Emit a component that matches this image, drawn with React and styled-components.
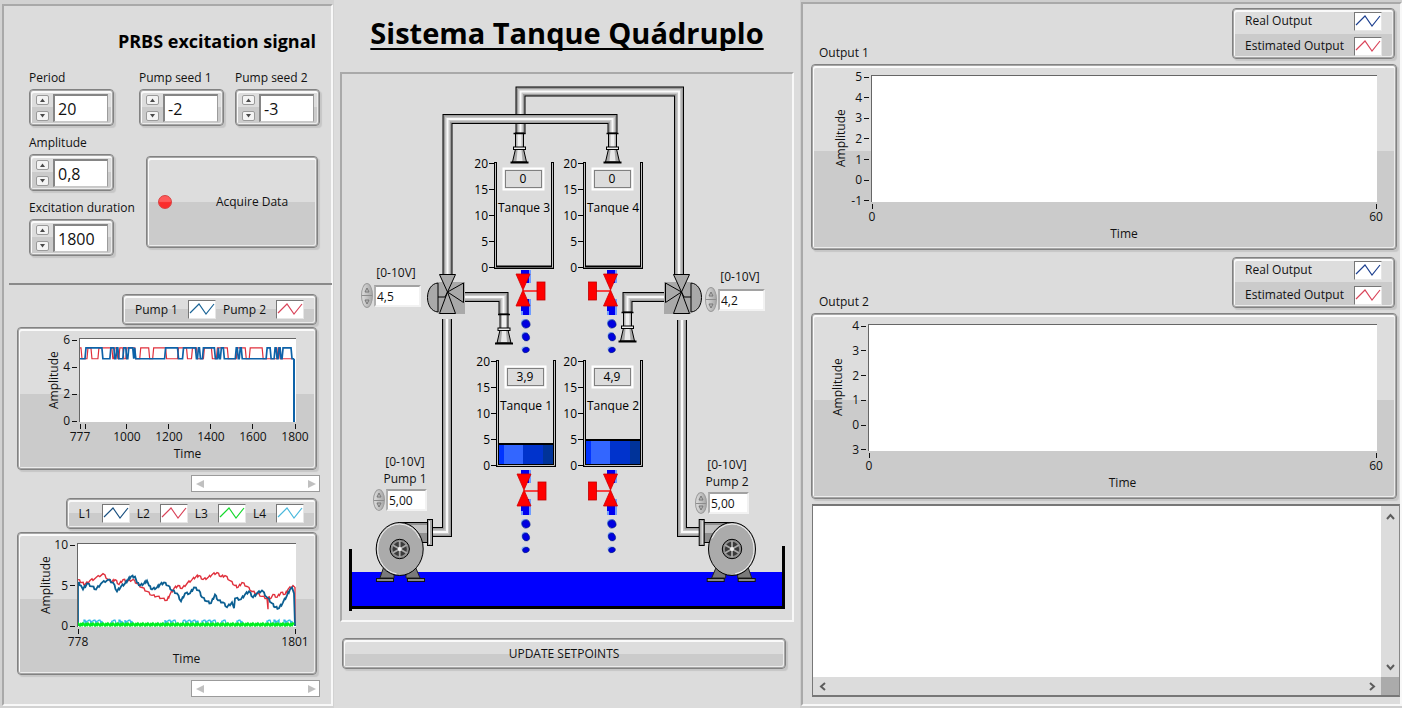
import React from "react";
import styled, { createGlobalStyle, css } from "styled-components";

const GlobalStyle = createGlobalStyle`
  *, *::before, *::after { box-sizing: border-box; }
  body {
    margin: 0;
    background: #dcdcdc;
    color: #111;
    font-family: "Open Sans", "Noto Sans", sans-serif;
    font-size: 12px;
    line-height: 16px;
  }
  button, input, textarea { font: inherit; color: inherit; }
`;

/* ---------- shared surfaces ---------- */

const bevel = css`
  border: 1px solid #828282;
  border-radius: 4px;
  background: linear-gradient(#dddddd 50%, #cbcbcb 50%);
  box-shadow:
    inset 0 0 0 1px #a6a6a6,
    inset 1px 2px 0 1px #fafafa,
    inset -1px -1px 0 1px #ececec,
    2px 2px 1px #c6c6c6;
`;

const Screen = styled.main`
  display: grid;
  grid-template-columns: 334px 466px minmax(0, 1fr);
  min-height: 100vh;
`;

const Column = styled.section`
  display: flex;
  flex-direction: column;
  min-width: 0;
  padding: ${(p) => p.$pad};
  background: ${(p) => p.$bg || "transparent"};
`;

const Frame = styled.div`
  flex: ${(p) => (p.$grow ? 1 : "none")};
  display: flex;
  flex-direction: column;
  padding-top: ${(p) => p.$top || 0}px;
  border: 2px solid;
  border-color: #a9a9a9 #f8f8f8 #f8f8f8 #a9a9a9;
  background: #dcdcdc;
`;

/* ---------- numeric fields ---------- */

const FieldBox = styled.div`
  display: flex;
  flex-direction: column;
  gap: 3px;
  width: 85px;
  white-space: nowrap;
`;

const FieldBody = styled.div`
  ${bevel}
  display: flex;
  align-items: center;
  gap: 4px;
  height: 37px;
  padding: 0 5px 0 6px;
`;

const Stepper = styled.div`
  display: flex;
  flex-direction: column;
  gap: 6px;
`;

const StepButton = styled.button`
  display: flex;
  align-items: center;
  justify-content: center;
  width: 13px;
  height: 10px;
  padding: 0;
  border: 1px solid #9a9a9a;
  border-radius: 2px;
  background: #f4f4f4;
`;

const FieldInput = styled.input`
  flex: 1;
  min-width: 0;
  height: 28px;
  padding: 2px 3px 0;
  border: 1px solid;
  border-width: 2px 1px 1px 2px;
  border-color: #858585 #9c9c9c #c8c8c8 #858585;
  border-radius: 0;
  background: #fff;
  font-size: 16px;
  line-height: 20px;
`;

const Arrow = ({ d, w = 7, h = 4, fill = "#4a4a4a" }) => (
  <svg width={w} height={h} viewBox={`0 0 ${w} ${h}`} aria-hidden="true">
    <path d={d} fill={fill} />
  </svg>
);

function NumericField({ id, label, value }) {
  return (
    <FieldBox>
      <label htmlFor={id}>{label}</label>
      <FieldBody>
        <Stepper>
          <StepButton type="button" aria-label={`Increase ${label}`}>
            <Arrow d="M3.5 0.5 L6 4 H1 Z" />
          </StepButton>
          <StepButton type="button" aria-label={`Decrease ${label}`}>
            <Arrow d="M1 0 H6 L3.5 3.5 Z" />
          </StepButton>
        </Stepper>
        <FieldInput id={id} defaultValue={value} />
      </FieldBody>
    </FieldBox>
  );
}

/* ---------- excitation section ---------- */

const Excitation = styled.section`
  display: flex;
  flex-direction: column;
  gap: 17px;
  height: 277px;
  padding: 23px 12px 0 25px;
`;

const SectionTitle = styled.h2`
  margin: 0;
  padding-right: 3px;
  text-align: right;
  font-size: 18px;
  line-height: 24px;
  font-weight: 700;
  color: #000;
`;

const FieldArea = styled.div`
  display: flex;
  gap: 25px;
`;

const Stack = styled.div`
  display: flex;
  flex-direction: column;
  gap: ${(p) => p.$gap}px;
`;

const SeedRow = styled.div`
  display: flex;
  gap: 11px;
`;

const AcquireButton = styled.button`
  ${bevel}
  display: flex;
  align-items: center;
  width: 172px;
  height: 92px;
  margin-left: 7px;
  padding: 0 11px;
`;

const Led = styled.span`
  width: 14px;
  height: 14px;
  border-radius: 50%;
  border: 1px solid #d84040;
  background: linear-gradient(#ff5a5a 45%, #fb2b2b 55%);
`;

const AcquireText = styled.span`
  flex: 1;
  padding-left: 26px;
  text-align: center;
`;

const Divider = styled.hr`
  width: calc(100% - 4px);
  height: 2px;
  margin: 0 0 0 5px;
  border: 0;
  background: #8a8a8a;
`;

/* ---------- legends ---------- */

const LegendBox = styled.div`
  ${bevel}
  display: flex;
  flex-direction: ${(p) => (p.$vertical ? "column" : "row")};
  justify-content: center;
  gap: ${(p) => (p.$vertical ? 6 : 7)}px;
  height: ${(p) => (p.$vertical ? 51 : 31)}px;
  padding: 0 12px;
  align-items: ${(p) => (p.$vertical ? "stretch" : "center")};
`;

const LegendItem = styled.span`
  display: flex;
  align-items: center;
  justify-content: space-between;
  gap: 10px;
  white-space: nowrap;
`;

const Swatch = styled.svg`
  width: 28px;
  height: 19px;
  border: 1px solid;
  border-color: #777 #e6e6e6 #e6e6e6 #777;
  background: #fff;
`;

function Legend({ items, vertical }) {
  return (
    <LegendBox $vertical={vertical}>
      {items.map(([name, color]) => (
        <LegendItem key={name}>
          {name}
          <Swatch viewBox="0 0 26 17" aria-hidden="true">
            <path d="M1 12 L10 3 L17 13 L25 3" fill="none" stroke={color} strokeWidth="1.2" />
          </Swatch>
        </LegendItem>
      ))}
    </LegendBox>
  );
}

/* ---------- charts ---------- */

const ChartBox = styled.figure`
  ${bevel}
  display: grid;
  grid-template-columns: 16px ${(p) => p.$axis}px minmax(0, 1fr);
  grid-template-rows: ${(p) => p.$height}px 22px 16px;
  row-gap: 1px;
  width: 100%;
  margin: 0;
  padding: 10px ${(p) => p.$right}px 7px ${(p) => p.$left}px;
  background: linear-gradient(#dddddd 47%, #cbcbcb 47%);
`;

const YTitle = styled.span`
  writing-mode: vertical-rl;
  transform: rotate(180deg);
  text-align: center;
`;

const YAxis = styled.div`
  display: flex;
  flex-direction: column;
  justify-content: space-between;
  padding: 2px 2px 1px 0;
`;

const YTick = styled.span`
  display: flex;
  align-items: center;
  justify-content: flex-end;
  gap: 2px;
  height: 0;
  &::after {
    content: "";
    width: 5px;
    height: 1px;
    background: #111;
  }
`;

const Plot = styled.svg`
  width: 100%;
  height: 100%;
  border-left: 1px solid #666;
  border-top: 1px solid #666;
  background: #fff;
`;

const XAxis = styled.div`
  grid-column: 3;
  display: flex;
  padding: 1px 1px 0;
`;

const XTick = styled.span`
  display: flex;
  flex-direction: column;
  align-items: center;
  width: 0;
  white-space: nowrap;
  &::before {
    content: "";
    flex: none;
    width: 1px;
    height: 5px;
    background: #111;
  }
`;

const XGap = styled.span`
  flex: ${(p) => p.$size};
`;

const XTitle = styled.figcaption`
  grid-column: 3;
  text-align: center;
`;

function Chart({ left, right, axis, height, yTicks, xTicks, children, viewBox }) {
  return (
    <ChartBox $left={left} $right={right} $axis={axis} $height={height}>
      <YTitle>Amplitude</YTitle>
      <YAxis>
        {yTicks.map((t, i) => (
          <YTick key={i}>{t}</YTick>
        ))}
      </YAxis>
      <Plot viewBox={viewBox} preserveAspectRatio="none">
        {children}
      </Plot>
      <XAxis>
        {xTicks.map(([at, text], i) => (
          <React.Fragment key={at}>
            {i > 0 && <XGap $size={at - xTicks[i - 1][0]} />}
            <XTick>{text}</XTick>
          </React.Fragment>
        ))}
      </XAxis>
      <XTitle>Time</XTitle>
    </ChartBox>
  );
}

/* Square wave that switches between the two excitation levels. */
const squareWave = (startHigh, toggles, end) => {
  let high = startHigh;
  let d = `M0 ${high ? 9 : 20}`;
  toggles.forEach((x) => {
    d += ` L${x} ${high ? 9 : 20}`;
    high = !high;
    d += ` L${x + 1} ${high ? 9 : 20}`;
  });
  return `${d} L${end} ${high ? 9 : 20}`;
};

const PUMP1_WAVE = squareWave(
  false,
  [5, 22, 30, 34, 36, 38, 43, 46, 48, 53, 54, 55, 85, 98, 103, 116, 118, 120, 123, 135, 138, 139, 141, 144, 156, 158, 160, 162, 187, 191, 195, 197, 199, 201, 203, 212],
  215
);
const PUMP2_WAVE = squareWave(
  true,
  [1, 7, 11, 18, 32, 34, 37, 39, 43, 46, 55, 60, 69, 73, 86, 98, 107, 112, 117, 124, 132, 137, 148, 157, 166, 170, 183, 198, 200],
  215
);

const LEVEL1 = [
  [0, 83], [0, 39], [3, 42], [5, 46], [9, 40], [14, 43], [18, 46], [23, 40], [30, 36], [35, 39], [39, 48], [43, 43],
  [47, 40], [50, 36], [53, 33], [57, 33], [59, 39], [62, 42], [66, 40], [69, 37], [71, 42], [74, 46], [79, 44],
  [82, 41], [86, 39], [90, 42], [94, 47], [99, 50], [103, 58], [107, 50], [112, 50], [116, 44], [121, 47],
  [124, 54], [129, 58], [133, 60], [137, 51], [140, 57], [145, 59], [149, 64], [154, 59], [156, 65], [157, 55],
  [163, 56], [167, 51], [171, 48], [175, 54], [179, 50], [184, 47], [189, 54], [194, 60], [197, 64], [201, 65],
  [205, 59], [209, 52], [212, 46], [214, 44], [216, 50], [217, 83],
];
const LEVEL2 = [
  [0, 36], [4, 39], [7, 41], [12, 37], [17, 35], [25, 30], [30, 36], [34, 38], [37, 36], [41, 41], [45, 36], [49, 38],
  [55, 36], [59, 40], [64, 44], [69, 48], [74, 52], [79, 53], [84, 55], [89, 57], [92, 51], [96, 45], [100, 42],
  [104, 45], [109, 40], [114, 36], [118, 33], [121, 32], [125, 36], [130, 34], [134, 31], [139, 29], [143, 33],
  [147, 32], [152, 37], [157, 42], [160, 44], [164, 39], [169, 43], [174, 48], [179, 50], [184, 53], [189, 55],
  [190, 66], [190, 54], [193, 55], [195, 51], [199, 54], [203, 49], [207, 51], [210, 46], [215, 42], [217, 44], [217, 83],
];

/* Sensor ripple added between the sampled points. */
const withRipple = (points) => {
  const out = [points[0].join(" ")];
  for (let i = 1; i < points.length; i += 1) {
    const [ax, ay] = points[i - 1];
    const [bx, by] = points[i];
    if (bx - ax > 2) {
      out.push(`${ax + (bx - ax) * 0.4} ${ay + (by - ay) * 0.4 - 1}`);
      out.push(`${ax + (bx - ax) * 0.6} ${ay + (by - ay) * 0.6 + 1}`);
    }
    out.push(`${bx} ${by}`);
  }
  return `M${out.join(" L")}`;
};

const GREEN_NOISE = `M0 82 ${Array.from({ length: 217 }, (_, x) => `L${x} ${82 + ((x * 7) % 5) * 0.5 - 1.5}`).join(" ")}`;
const CYAN_NOISE = [
  [6, 24], [33, 38], [41, 44], [47, 54], [87, 98], [105, 120], [124, 138], [143, 148], [159, 164], [189, 193], [196, 201], [206, 214],
]
  .map(([a, b]) => {
    let d = `M${a} 82`;
    for (let x = a; x <= b; x += 1) d += ` L${x} ${[78, 77, 78, 77, 80][(x * 3) % 5]}`;
    return `${d} L${b} 82`;
  })
  .join(" ");

/* ---------- trend section ---------- */

const Trends = styled.section`
  display: flex;
  flex-direction: column;
  align-items: flex-end;
  padding: 9px 11px 0 13px;
`;

const TrendGroup = styled.div`
  display: flex;
  flex-direction: column;
  align-items: flex-end;
  gap: ${(p) => p.$gap}px;
  width: 100%;
  padding-right: 3px;
  margin-bottom: 5px;
`;

const ScrollStrip = styled.div`
  display: flex;
  align-items: center;
  justify-content: space-between;
  width: 129px;
  height: 17px;
  margin-bottom: 6px;
  padding: 0 3px;
  border: 1px solid #9b9b9b;
  background: #fff;
`;

const PlainButton = styled.button`
  display: flex;
  align-items: center;
  justify-content: center;
  width: ${(p) => p.$w}px;
  height: ${(p) => p.$h}px;
  padding: 0;
  border: 0;
  background: none;
`;

function HistoryScroll() {
  return (
    <ScrollStrip>
      <PlainButton type="button" aria-label="Scroll back" $w={9} $h={13}>
        <Arrow w={8} h={8} d="M8 0 V8 L0 4 Z" fill="#c0c0c0" />
      </PlainButton>
      <PlainButton type="button" aria-label="Scroll forward" $w={9} $h={13}>
        <Arrow w={8} h={8} d="M0 0 V8 L8 4 Z" fill="#c0c0c0" />
      </PlainButton>
    </ScrollStrip>
  );
}

/* ---------- plant diagram ---------- */

const ORIGIN = { x: 342, y: 74 };

const PageTitle = styled.h1`
  margin: 0;
  padding: 12px 0 18px;
  text-align: center;
  font-size: 29px;
  line-height: 42px;
  font-weight: 700;
  color: #000;
  text-decoration: underline;
  text-decoration-thickness: 2px;
  text-underline-offset: 4px;
  text-decoration-skip-ink: none;
  white-space: nowrap;
`;

const Canvas = styled.div`
  position: relative;
  width: 450px;
  height: 546px;
`;

const Drawing = styled.svg`
  display: block;
  width: 450px;
  height: 546px;
  font-size: 12px;
`;

const Placed = styled.div`
  position: absolute;
  left: ${(p) => p.$x - ORIGIN.x}px;
  top: ${(p) => p.$y - ORIGIN.y}px;
  display: flex;
  flex-direction: column;
  gap: 2px;
`;

const SetpointLabel = styled.label`
  padding-left: 10px;
  text-align: center;
  line-height: 17px;
  white-space: pre-line;
`;

const SetpointRow = styled.div`
  display: flex;
  align-items: center;
  gap: 1px;
`;

const OvalSpinner = styled.div`
  display: flex;
  flex-direction: column;
  width: 12px;
  height: ${(p) => (p.$tall ? 25 : 22)}px;
  border: 1px solid #9a9a9a;
  border-radius: 50%;
  overflow: hidden;
  background: linear-gradient(90deg, #dcdcdc, #a8a8a8);
`;

const OvalButton = styled.button`
  flex: 1;
  display: flex;
  align-items: center;
  justify-content: center;
  padding: 0;
  border: 0;
  background: none;
  & + & { border-top: 1px solid #8c8c8c; }
`;

const SetpointInput = styled.input`
  width: ${(p) => p.$w}px;
  height: 22px;
  padding: 1px 1px 0;
  border: 2px solid;
  border-color: #a2a2a2 #f2f2f2 #f2f2f2 #b0b0b0;
  border-radius: 0;
  background: #fff;
`;

function Setpoint({ id, x, y, label, value, width, tall }) {
  return (
    <Placed $x={x} $y={y}>
      <SetpointLabel htmlFor={id}>{label}</SetpointLabel>
      <SetpointRow>
        <OvalSpinner $tall={tall}>
          <OvalButton type="button" aria-label="Increase">
            <svg width="6" height="6" viewBox="0 0 6 6"><path d="M1 5 L3 1 L5 5 Z" fill="#bbb" stroke="#777" /></svg>
          </OvalButton>
          <OvalButton type="button" aria-label="Decrease">
            <svg width="6" height="6" viewBox="0 0 6 6"><path d="M1 1 L3 5 L5 1 Z" fill="#bbb" stroke="#777" /></svg>
          </OvalButton>
        </OvalSpinner>
        <SetpointInput id={id} defaultValue={value} $w={width} />
      </SetpointRow>
    </Placed>
  );
}

const Pipe = ({ d }) => (
  <g fill="none" strokeLinejoin="miter">
    <path d={d} stroke="#000" strokeWidth="10" />
    <path d={d} stroke="#9c9c9c" strokeWidth="8" />
    <path d={d} stroke="#c8c8c8" strokeWidth="5" />
    <path d={d} stroke="#fafafa" strokeWidth="2" />
  </g>
);

const Nozzle = ({ x, y }) => (
  <g transform={`translate(${x} ${y})`}>
    <rect x="-4" y="0" width="8" height="15" fill="#b4b4b4" stroke="#000" />
    <rect x="-2" y="0" width="4" height="15" fill="#f0f0f0" />
    <path d="M-4 16 H4 L7 29 H-7 Z" fill="#a8a8a8" stroke="#000" />
    <path d="M-2 17 H2 L3 28 H-3 Z" fill="#e8e8e8" />
    <path d="M-6 0.5 H6" stroke="#000" strokeWidth="1.5" />
    <rect x="-6" y="14" width="12" height="2.5" fill="#eee" stroke="#000" />
    <path d="M-9 29.5 H9" stroke="#000" strokeWidth="2" />
  </g>
);

const ThreeWayValve = ({ transform }) => (
  <g transform={transform} fill="#a9a9a9" stroke="#000">
    <rect x="438" y="282" width="27" height="32" stroke="none" />
    <path d="M438 283 C424 284 424 311 438 312 Z" />
    <path d="M439.5 274.5 H455.5 L447.5 292 Z" />
    <path d="M447.5 292 L455.5 313.5 H439.5 Z" />
    <path d="M447.5 292 L463.5 283 V302.5 Z" />
    <path d="M438 297 H445 L447.5 292" fill="none" />
  </g>
);

const Drop = ({ x, y, rx, ry }) => (
  <g>
    <ellipse cx={x - 1} cy={y - 1} rx={rx} ry={ry} fill="#7ba4f5" />
    <ellipse cx={x} cy={y} rx={rx} ry={ry} transform={`rotate(-20 ${x} ${y})`} fill="#0000e0" stroke="#001a80" strokeWidth="0.6" />
  </g>
);

/* Outlet of a tank: supply stub, hand valve and falling drops. */
const Outlet = ({ x, y, water, side }) => (
  <g>
    <rect x={water - 5} y={y - 4} width="10" height="13" fill="#0000f0" />
    <rect x={water + 3} y={y - 4} width="2" height="13" fill="#6f9cff" />
    <rect x={water - 5} y={y + 25} width="10" height="16" fill="#0000f0" />
    <rect x={water + 3} y={y + 25} width="2" height="16" fill="#6f9cff" />
    <rect x={water - 5} y={y + 37} width="2" height="4" fill="#6f9cff" />
    <path d={`M${x - 7} ${y} H${x + 7} L${x} ${y + 16} L${x + 7} ${y + 32} H${x - 7} L${x} ${y + 16} Z`} fill="#ff0000" stroke="#d00000" strokeWidth="0.8" />
    <path d={`M${x} ${y + 17} H${x + side * 15}`} stroke="#ff0000" strokeWidth="1.4" />
    <rect x={x + side * 18 - 4} y={y + 8} width="8" height="18" fill="#ff0000" stroke="#c00000" strokeWidth="0.8" />
    <Drop x={water} y={y + 50} rx={4} ry={4} />
    <Drop x={water} y={y + 63} rx={3.4} ry={4} />
    <Drop x={water} y={y + 76} rx={3.4} ry={2.6} />
  </g>
);

const Tank = ({ x, y, name, value, level }) => (
  <g>
    {level > 0 && (
      <g>
        <rect x={x + 2} y={y + 105 - level} width="6" height={level} fill="#0033ff" />
        <rect x={x + 8} y={y + 105 - level} width="19" height={level} fill="#3366ff" />
        <rect x={x + 27} y={y + 105 - level} width="20" height={level} fill="#0033cc" />
        <rect x={x + 47} y={y + 105 - level} width="11" height={level} fill="#003399" />
        <rect x={x + 2} y={y + 104 - level} width="56" height="2" fill="#000" />
      </g>
    )}
    <path d={`M${x + 1.5} ${y} V${y + 105.5} H${x + 58.5} V${y}`} fill="none" stroke="#000" strokeWidth="3" />
    <path d={`M${x + 1.5} ${y + 1} V${y + 105.5} H${x + 58.5} V${y + 1}`} fill="none" stroke="#c4c4c4" strokeWidth="1" />
    {level === 0 && <path d={`M${x + 2} ${y + 104.5} H${x + 58}`} stroke="#000" strokeWidth="2" />}
    {[20, 15, 10, 5, 0].map((mark, i) => (
      <g key={mark}>
        <path d={`M${x - 5} ${y + 1.5 + i * 26} H${x}`} stroke="#000" />
        <text x={x - 6} y={y + 6 + i * 26} textAnchor="end">{mark}</text>
      </g>
    ))}
    <rect x={x + 9.5} y={y + 6.5} width="40" height="21" fill="#dcdcdc" stroke="#fff" strokeWidth="2" />
    <rect x={x + 11.5} y={y + 8.5} width="36" height="17" fill="#dcdcdc" stroke="#808080" />
    <text x={x + 29} y={y + 21} textAnchor="middle">{value}</text>
    <text x={x + 30} y={y + 50} textAnchor="middle">{name}</text>
  </g>
);

const Pump = ({ transform }) => (
  <g transform={transform}>
    <path d="M384 566 L380 578 H394 V570 Z M415 566 L420 578 H406 V570 Z" fill="#7a7a7a" stroke="#222" />
    <rect x="376.5" y="578.5" width="17" height="3" fill="#8a8a8a" stroke="#111" />
    <rect x="407.5" y="578.5" width="17" height="3" fill="#8a8a8a" stroke="#111" />
    <path d="M398 522.5 H428 V542.5 H420 Z" fill="#8f8f8f" stroke="#000" />
    <path d="M404 525 H427 V533 H412 Z" fill="#c2c2c2" />
    <rect x="427.5" y="519.5" width="5" height="26" fill="#a8a8a8" stroke="#000" />
    <path d="M429.5 521 V544" stroke="#f4f4f4" />
    <ellipse cx="399.7" cy="549" rx="23.5" ry="26.5" fill="#ababab" stroke="#000" />
    <ellipse cx="399.7" cy="549" rx="22" ry="25" fill="none" stroke="#f2f2f2" strokeWidth="1" strokeDasharray="96 54" strokeDashoffset="-40" />
    <circle cx="399.7" cy="549" r="9.7" fill="#8d8d8d" stroke="#000" />
    <circle cx="399.7" cy="549" r="7.2" fill="#3a3a3a" />
    <g stroke="#a8a8a8" strokeWidth="1.8">
      <path d="M399.7 541 V557 M392.7 545 L406.7 553 M392.7 553 L406.7 545" />
    </g>
    <circle cx="399.7" cy="549" r="2" fill="#eee" />
  </g>
);

function Plant() {
  return (
    <Canvas>
      <Drawing viewBox="342 74 450 546" role="img" aria-label="Sistema Tanque Quádruplo">
        <rect x="352" y="572" width="431" height="35" fill="#0000ff" />
        <path d="M350.5 549 V611" stroke="#000" strokeWidth="3" />
        <path d="M350 607.5 H785" stroke="#000" strokeWidth="3" />
        <path d="M783.5 546 V608" stroke="#000" strokeWidth="3" />

        <Pipe d="M520.5 134 V91.5 H679 V276" />
        <Pipe d="M447.5 276 V119 H612.5 V134" />
        <Pipe d="M447 319 V532 H433" />
        <Pipe d="M682 320 V532 H699" />
        <Pipe d="M464 297 H503.5 V315" />
        <Pipe d="M665 297 H627.5 V313" />

        <Nozzle x={519.5} y={133} />
        <Nozzle x={612.5} y={133} />
        <Nozzle x={504} y={314} />
        <Nozzle x={627.5} y={312} />

        <ThreeWayValve />
        <ThreeWayValve transform="translate(1129 0) scale(-1 1)" />

        <Outlet x={523} y={274} water={526} side={1} />
        <Outlet x={610.5} y={274} water={612} side={-1} />
        <Outlet x={524} y={474} water={526} side={1} />
        <Outlet x={610.5} y={474} water={612} side={-1} />

        <Tank x={494} y={162} name="Tanque 3" value="0" level={0} />
        <Tank x={583} y={162} name="Tanque 4" value="0" level={0} />
        <Tank x={496} y={360} name="Tanque 1" value="3,9" level={21} />
        <Tank x={583} y={360} name="Tanque 2" value="4,9" level={25} />

        <Pump />
        <Pump transform="translate(1131.7 0) scale(-1 1)" />
      </Drawing>

      <Setpoint id="valve1" x={361} y={264} label="[0-10V]" value="4,5" width={47} tall />
      <Setpoint id="valve2" x={705} y={268} label="[0-10V]" value="4,2" width={47} tall />
      <Setpoint id="pump1" x={373} y={453} label={"[0-10V]\nPump 1"} value="5,00" width={41} />
      <Setpoint id="pump2" x={695} y={456} label={"[0-10V]\nPump 2"} value="5,00" width={41} />
    </Canvas>
  );
}

const UpdateButton = styled.button`
  ${bevel}
  height: 31px;
  margin: 16px 8px 0 2px;
`;

/* ---------- outputs ---------- */

const OutputHeader = styled.div`
  display: flex;
  align-items: flex-end;
  justify-content: space-between;
  padding: 2px 2px 5px 8px;
`;

const OutputName = styled.h3`
  margin: 0 0 -2px;
  font-size: 12px;
  font-weight: 400;
`;

const OutputGroup = styled.section`
  display: flex;
  flex-direction: column;
  margin: 0 3px 5px 8px;
`;

const OUTPUT_ITEMS = [
  ["Real Output", "#1c3f8f"],
  ["Estimated Output", "#d9445a"],
];

const TextPane = styled.div`
  display: grid;
  grid-template-columns: minmax(0, 1fr) 18px;
  grid-template-rows: minmax(0, 1fr) 18px;
  flex: 1;
  min-height: 160px;
  margin: 0 0 7px 9px;
  border: 2px solid;
  border-color: #777 #888 #777 #777;
  border-width: 2px 1px 2px 1px;
  background: #dcdcdc;
`;

const Message = styled.textarea`
  width: 100%;
  height: 100%;
  padding: 4px;
  border: 0;
  resize: none;
  background: #fff;
`;

const ScrollRail = styled.div`
  display: flex;
  flex-direction: ${(p) => (p.$vertical ? "column" : "row")};
  align-items: center;
  justify-content: space-between;
  padding: ${(p) => (p.$vertical ? "2px 0" : "0 1px")};
  background: #dcdcdc;
`;

const Corner = styled.div`
  background: #ababab;
`;

const Chevron = ({ d }) => (
  <svg width="9" height="9" viewBox="0 0 9 9" aria-hidden="true">
    <path d={d} fill="none" stroke="#5c5c5c" strokeWidth="2" />
  </svg>
);

function Output({ name, axis, left, yTicks }) {
  return (
    <OutputGroup>
      <OutputHeader>
        <OutputName>{name}</OutputName>
        <Legend vertical items={OUTPUT_ITEMS} />
      </OutputHeader>
      <Chart left={left} right={19} axis={axis} height={127} yTicks={yTicks} xTicks={[[0, "0"], [60, "60"]]} viewBox="0 0 506 127" />
    </OutputGroup>
  );
}

/* ---------- page ---------- */

export default function App() {
  return (
    <>
      <GlobalStyle />
      <Screen>
        <Column $pad="4px 1px 2px 2px" $bg="#d2d2d2">
          <Frame $grow>
            <Excitation>
              <SectionTitle>PRBS excitation signal</SectionTitle>
              <FieldArea>
                <Stack $gap={9}>
                  <NumericField id="period" label="Period" value="20" />
                  <NumericField id="amplitude" label="Amplitude" value="0,8" />
                  <NumericField id="duration" label="Excitation duration" value="1800" />
                </Stack>
                <Stack $gap={30}>
                  <SeedRow>
                    <NumericField id="seed1" label="Pump seed 1" value="-2" />
                    <NumericField id="seed2" label="Pump seed 2" value="-3" />
                  </SeedRow>
                  <AcquireButton type="button">
                    <Led />
                    <AcquireText>Acquire Data</AcquireText>
                  </AcquireButton>
                </Stack>
              </FieldArea>
            </Excitation>
            <Divider />
            <Trends>
              <TrendGroup $gap={2}>
                <Legend items={[["Pump 1", "#1a6496"], ["Pump 2", "#d9445a"]]} />
                <Chart
                  left={28}
                  right={20}
                  axis={17}
                  height={84}
                  yTicks={[6, 4, 2, 0]}
                  xTicks={[[777, "777"], [801, ""], [1000, "1000"], [1200, "1200"], [1400, "1400"], [1600, "1600"], [1800, "1800"]]}
                  viewBox="0 0 217 84"
                >
                  <path d={PUMP2_WAVE} fill="none" stroke="#e0303c" strokeWidth="1.2" />
                  <path d={PUMP1_WAVE} fill="none" stroke="#0d62a8" strokeWidth="1.7" />
                  <path d="M215 20 V84" stroke="#0d62a8" strokeWidth="2" />
                </Chart>
              </TrendGroup>
              <HistoryScroll />
              <TrendGroup $gap={3}>
                <Legend items={[["L1", "#1a5080"], ["L2", "#d9445a"], ["L3", "#15d82c"], ["L4", "#4ab8dc"]]} />
                <Chart
                  left={20}
                  right={20}
                  axis={23}
                  height={84}
                  yTicks={[10, 5, 0]}
                  xTicks={[[778, "778"], [1801, "1801"]]}
                  viewBox="0 0 218 84"
                >
                  <path d={withRipple(LEVEL2)} fill="none" stroke="#e0303c" strokeWidth="1.4" />
                  <path d={withRipple(LEVEL1)} fill="none" stroke="#0b5f92" strokeWidth="1.8" />
                  <path d={CYAN_NOISE} fill="none" stroke="#30b8ea" strokeWidth="1.3" />
                  <path d={GREEN_NOISE} fill="none" stroke="#00ee20" strokeWidth="2.4" />
                </Chart>
              </TrendGroup>
              <HistoryScroll />
            </Trends>
          </Frame>
        </Column>

        <Column $pad="0 6px 0 6px">
          <PageTitle>Sistema Tanque Quádruplo</PageTitle>
          <Frame>
            <Plant />
          </Frame>
          <UpdateButton type="button">UPDATE SETPOINTS</UpdateButton>
        </Column>

        <Column $pad="2px 0 2px 1px" $bg="#cecece">
          <Frame $grow $top={2}>
            <Output name="Output 1" left={21} axis={22} yTicks={[5, 4, 3, 2, 1, 0, -1]} />
            <Output name="Output 2" left={18} axis={22} yTicks={[4, 3, 2, 1, 0, 3]} />
            <TextPane>
              <Message aria-label="Messages" />
              <ScrollRail $vertical>
                <PlainButton type="button" aria-label="Scroll up" $w={16} $h={16}><Chevron d="M1 7 L4.5 3 L8 7" /></PlainButton>
                <PlainButton type="button" aria-label="Scroll down" $w={16} $h={16}><Chevron d="M1 2 L4.5 6 L8 2" /></PlainButton>
              </ScrollRail>
              <ScrollRail>
                <PlainButton type="button" aria-label="Scroll left" $w={16} $h={16}><Chevron d="M7 1 L3 4.5 L7 8" /></PlainButton>
                <PlainButton type="button" aria-label="Scroll right" $w={16} $h={16}><Chevron d="M2 1 L6 4.5 L2 8" /></PlainButton>
              </ScrollRail>
              <Corner />
            </TextPane>
          </Frame>
        </Column>
      </Screen>
    </>
  );
}
